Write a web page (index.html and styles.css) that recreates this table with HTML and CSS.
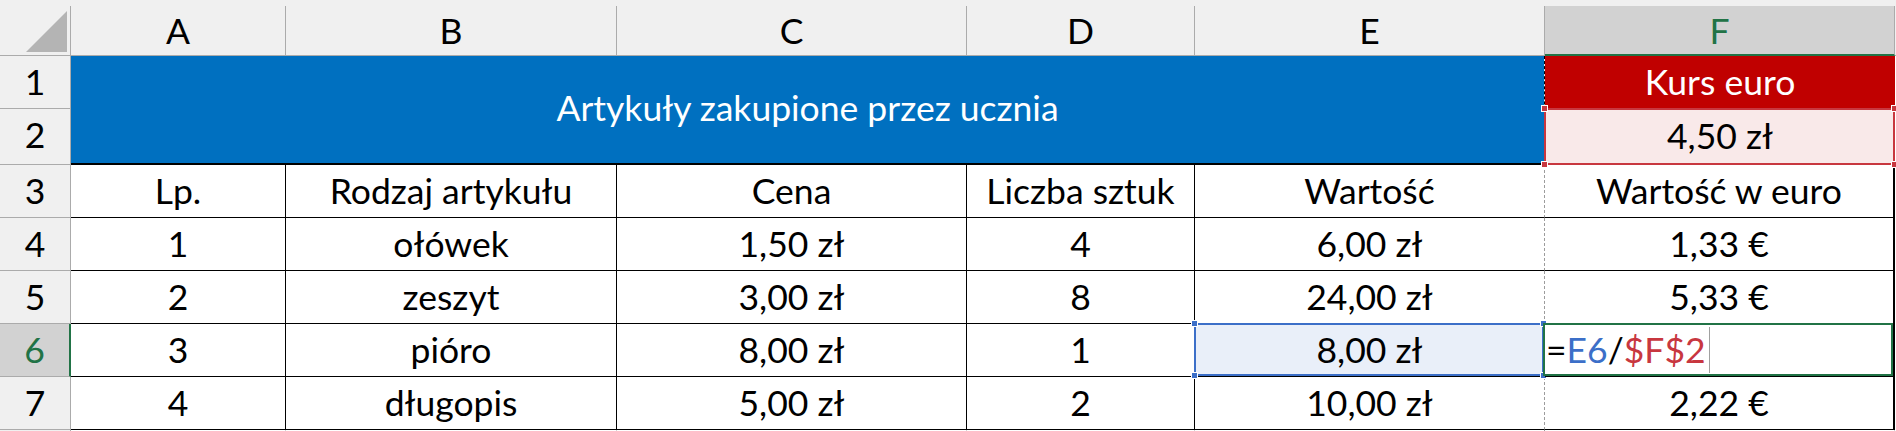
FILE: index.html
```html
<!DOCTYPE html>
<html lang="pl">
<head>
<meta charset="utf-8">
<title>Arkusz</title>
<link rel="stylesheet" href="styles.css">
</head>
<body>
<div class="sheet">
  <div class="corner"><svg width="71" height="55" viewBox="0 0 71 55"><polygon points="26,52 67,52 67,11" fill="#B4B4B4"/><line x1="70.5" y1="6" x2="70.5" y2="55" stroke="#ABABAB" stroke-width="1"/></svg></div>
  <div class="ch">A</div>
  <div class="ch">B</div>
  <div class="ch">C</div>
  <div class="ch">D</div>
  <div class="ch">E</div>
  <div class="ch sel">F</div>
  <div class="ch edge"></div>

  <div class="rh">1</div>
  <div class="title">Artykuły zakupione przez ucznia</div>
  <div class="kurs">Kurs euro</div>
  <div class="edge"></div>

  <div class="rh r2">2</div>
  <div class="rate">4,50 zł<span class="ref-red"><i class="h tl"></i><i class="h tr"></i><i class="h bl"></i><i class="h br"></i></span></div>
  <div class="edge"></div>

  <div class="rh">3</div>
  <div class="c">Lp.</div>
  <div class="c">Rodzaj artykułu</div>
  <div class="c">Cena</div>
  <div class="c">Liczba sztuk</div>
  <div class="c e">Wartość</div>
  <div class="c f">Wartość w euro</div>
  <div class="edge"></div>

  <div class="rh">4</div>
  <div class="c">1</div>
  <div class="c">ołówek</div>
  <div class="c">1,50 zł</div>
  <div class="c">4</div>
  <div class="c e">6,00 zł</div>
  <div class="c f">1,33 €</div>
  <div class="edge"></div>

  <div class="rh">5</div>
  <div class="c">2</div>
  <div class="c">zeszyt</div>
  <div class="c">3,00 zł</div>
  <div class="c">8</div>
  <div class="c e">24,00 zł</div>
  <div class="c f">5,33 €</div>
  <div class="edge"></div>

  <div class="rh sel">6</div>
  <div class="c">3</div>
  <div class="c">pióro</div>
  <div class="c">8,00 zł</div>
  <div class="c">1</div>
  <div class="c e refcell">8,00 zł<span class="ref-blue"><i class="h tl"></i><i class="h tr"></i><i class="h bl"></i><i class="h br"></i></span></div>
  <div class="c f active">=<span class="fb">E6</span>/<span class="fr">$F$2</span><span class="caret"></span><span class="active-box"></span></div>
  <div class="edge"></div>

  <div class="rh">7</div>
  <div class="c">4</div>
  <div class="c">długopis</div>
  <div class="c">5,00 zł</div>
  <div class="c">2</div>
  <div class="c e">10,00 zł</div>
  <div class="c f">2,22 €</div>
  <div class="edge"></div>

  <div class="rh"></div>
  <div class="c blank"></div>
  <div class="c blank"></div>
  <div class="c blank"></div>
  <div class="c blank"></div>
  <div class="c blank e"></div>
  <div class="c blank"></div>
  <div class="edge"></div>
</div>
</body>
</html>
```

FILE: styles.css
```css
html, body {
  margin: 0;
  padding: 0;
  overflow: hidden;
  background: #ffffff;
}

body {
  font-family: Lato, "Liberation Sans", sans-serif;
  font-size: 35.5px;
  color: #000000;
}

.sheet {
  display: grid;
  grid-template-columns: 71px 215px 331px 350px 228px 350px 350px 1px;
  grid-template-rows: 56px 53px 56px 53px 53px 53px 53px 53px 20px;
  width: 1896px;
  height: 431px;
  overflow: hidden;
  background: #F0F0F0;
}

.sheet > div {
  box-sizing: border-box;
  display: flex;
  align-items: flex-end;
  justify-content: center;
  line-height: 40px;
  white-space: nowrap;
}

.corner {
  border-bottom: 1px solid #ABABAB;
}

.corner svg {
  display: block;
}

.ch {
  margin-top: 6px;
  border-right: 1px solid #ABABAB;
  border-bottom: 1px solid #ABABAB;
  padding-bottom: 4px;
}

.ch.sel {
  background: #D2D2D2;
  color: #217346;
  border-bottom: 2px solid #217346;
  padding-bottom: 3px;
}

.ch.edge {
  border-right: none;
  background: #F0F0F0;
}

.rh {
  background: #F0F0F0;
  border-right: 1px solid #ABABAB;
  border-bottom: 1px solid #ABABAB;
  padding-bottom: 6px;
}

.rh.r2 {
  padding-bottom: 9px;
}

.rh.sel {
  background: #D2D2D2;
  color: #217346;
  border-right: 2px solid #217346;
}

.edge {
  background: #ffffff;
}

.sheet > .title {
  grid-column: span 5;
  grid-row: span 2;
  background: #0070C0;
  background-clip: padding-box;
  color: #ffffff;
  align-items: center;
  padding-bottom: 4px;
  border-bottom: 2px solid #000000;
  border-right: 1px dashed #000000;
}

.kurs {
  background: #C00000;
  color: #ffffff;
  padding-bottom: 7px;
}

.rate {
  position: relative;
  background: #F9E9E9;
  padding-bottom: 9px;
}

.c {
  background: #ffffff;
  border-right: 1px solid #000000;
  border-bottom: 1px solid #000000;
  padding-bottom: 6px;
}

.c.e {
  border-right: 1px dashed #9C9C9C;
}

.c.f {
  border-right: 2px solid #000000;
}

.c.blank {
  border-bottom: none;
  border-right-color: #D4D4D4;
}

.c.blank.e {
  border-right: 1px dashed #9C9C9C;
}

.refcell {
  position: relative;
  background: #E9EFF9;
}

.ref-blue,
.ref-red,
.active-box {
  position: absolute;
  box-sizing: border-box;
  border: 2px solid;
  pointer-events: none;
}

.ref-blue {
  top: -1px;
  left: -1px;
  right: 0;
  bottom: 0;
  border-color: #3C6FC8;
}

.ref-red {
  top: -1px;
  left: -1px;
  right: 0;
  bottom: 0;
  border-color: #C8373F;
}

.h {
  position: absolute;
  width: 5px;
  height: 5px;
  border: 1px solid #ffffff;
  background: currentColor;
}

.ref-blue .h { color: #3C6FC8; }
.ref-red .h { color: #C8373F; }

.h.tl { top: -5px; left: -5px; }
.h.tr { top: -5px; right: -5px; }
.h.bl { bottom: -5px; left: -5px; }
.h.br { bottom: -5px; right: -5px; }

.sheet > .active {
  position: relative;
  justify-content: flex-start;
  padding-left: 1px;
}

.active-box {
  top: -1px;
  left: -2px;
  right: 0;
  bottom: 0;
  border-color: #217346;
}

.fb { color: #3C6FC8; }
.fr { color: #C8373F; }

.caret {
  display: inline-block;
  width: 1px;
  height: 46px;
  margin-left: 3px;
  margin-bottom: -3px;
  background: #A0A0A0;
}
```
